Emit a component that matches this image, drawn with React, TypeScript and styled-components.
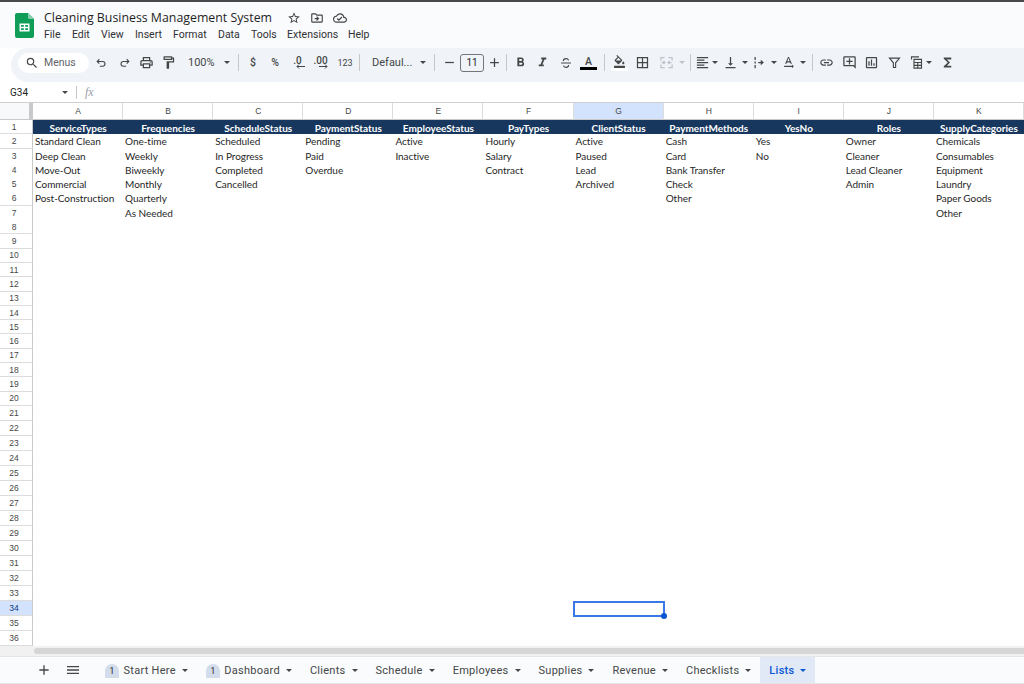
import React from "react";
import styled, { createGlobalStyle } from "styled-components";
import {
  MdOutlineStarBorder, MdOutlineDriveFileMove, MdOutlineCloudDone, MdSearch,
  MdOutlinePrint, MdOutlineFormatPaint, MdFormatBold, MdFormatItalic,
  MdOutlineFormatColorFill, MdBorderAll, MdFormatAlignLeft, MdVerticalAlignBottom,
  MdLink, MdOutlineAddComment, MdOutlineInsertChart,
  MdFunctions, MdAdd, MdRemove, MdMenu, MdTextRotationNone,
} from "react-icons/md";

const Global = createGlobalStyle`
  html, body { margin: 0; padding: 0; background: #fff; overflow: hidden; }
  * { box-sizing: border-box; }
`;

const Page = styled.div`
  width: 1024px;
  height: 684px;
  display: flex;
  flex-direction: column;
  font-family: Roboto, "Liberation Sans", sans-serif;
  color: #444746;
  background: #fff;
  overflow: hidden;
`;

const Header = styled.header`
  height: 48px;
  flex: none;
  display: flex;
  background: #fafbfd;
  border-top: 2px solid #4a4a4a;
  padding: 11px 0 0 15px;
  gap: 10px;
`;

const Logo = styled.svg`
  width: 19px;
  height: 25px;
  flex: none;
`;

const TitleBlock = styled.div`
  display: flex;
  flex-direction: column;
`;

const TitleRow = styled.div`
  display: flex;
  align-items: center;
  height: 15px;
  margin-top: -3px;
`;

const Title = styled.div`
  font-family: "Open Sans", sans-serif;
  font-size: 12.35px;
  line-height: 15px;
  color: #1f1f1f;
  width: 238px;
  white-space: nowrap;
`;

const TitleIcon = styled.span`
  width: 23px;
  display: flex;
  justify-content: center;
  color: #444746;
  font-size: 14px;
`;

const MenuBar = styled.nav`
  display: flex;
  margin-top: 2px;
`;

const MenuItem = styled.span<{ $w: number }>`
  width: ${(p) => p.$w}px;
  font-size: 10.5px;
  line-height: 16px;
  color: #303134;
  white-space: nowrap;
`;

const Toolbar = styled.div`
  height: 34px;
  flex: none;
  margin-left: 11px;
  padding: 0 0 5px 7px;
  display: flex;
  align-items: center;
  background: #f0f4f9;
  border-radius: 17px 0 0 17px;
`;

const SearchPill = styled.div`
  width: 71px;
  height: 20px;
  flex: none;
  border-radius: 10px;
  background: #fff;
  display: flex;
  align-items: center;
  padding-left: 7px;
  font-size: 10.5px;
  color: #5f6368;
  gap: 5px;
  svg { font-size: 14px; color: #444746; }
`;

const Tool = styled.span<{ $w: number; $dim?: boolean }>`
  width: ${(p) => p.$w}px;
  height: 22px;
  flex: none;
  display: flex;
  align-items: center;
  justify-content: center;
  font-size: 15px;
  color: ${(p) => (p.$dim ? "#bfc3c7" : "#444746")};
  svg { flex: none; }
`;

const ToolText = styled(Tool)`
  font-size: 10.5px;
  font-weight: 500;
`;

const SmallNum = styled(Tool)`
  font-size: 9px;
`;

const Decimal = styled(Tool)`
  font-size: 10px;
  font-weight: 500;
  flex-direction: column;
  line-height: 9px;
  svg { margin: -1px -5px 0 0; }
`;

const Select = styled.span<{ $w: number }>`
  width: ${(p) => p.$w}px;
  height: 22px;
  flex: none;
  padding: 0 7px 0 9px;
  display: flex;
  align-items: center;
  justify-content: space-between;
  font-size: 11px;
  color: #444746;
`;

const Caret = styled.span<{ $dim?: boolean; $blue?: boolean }>`
  width: 0;
  height: 0;
  flex: none;
  border-left: 3.5px solid transparent;
  border-right: 3.5px solid transparent;
  border-top: 3.5px solid ${(p) => (p.$blue ? "#0b57d0" : p.$dim ? "#bfc3c7" : "#444746")};
`;

const Sep = styled.span<{ $l: number; $r: number }>`
  width: 1px;
  height: 17px;
  flex: none;
  margin: 0 ${(p) => p.$r}px 0 ${(p) => p.$l}px;
  background: #c7c7c7;
`;

const SizeBox = styled.span`
  width: 24px;
  height: 18px;
  flex: none;
  display: flex;
  align-items: center;
  justify-content: center;
  border: 1px solid #747775;
  border-radius: 3px;
  font-size: 10px;
  color: #1f1f1f;
`;

const ColorLetter = styled.span`
  display: flex;
  flex-direction: column;
  align-items: center;
  width: 18px;
  font-size: 10.5px;
  font-weight: 500;
  line-height: 11px;
  color: #444746;
`;

const ColorBar = styled.span<{ $c: string }>`
  width: 17px;
  height: 3px;
  background: ${(p) => p.$c};
`;

const FillStack = styled.span`
  display: flex;
  flex-direction: column;
  align-items: center;
`;

const FormulaBar = styled.div`
  height: 20px;
  flex: none;
  display: flex;
  align-items: center;
  background: #fff;
  padding-left: 10px;
  font-size: 10px;
  color: #1f1f1f;
`;

const NameBox = styled.span`
  width: 58px;
  display: flex;
  justify-content: space-between;
  align-items: center;
`;

const FxSep = styled.span`
  width: 1px;
  height: 13px;
  margin: 0 8px 0 8px;
  background: #c7c7c7;
`;

const Fx = styled.span`
  font-family: "Liberation Serif", serif;
  font-style: italic;
  font-size: 12px;
  color: #9aa0a6;
`;

const Sheet = styled.div`
  flex: 1;
  min-height: 0;
  display: flex;
  flex-direction: column;
  background: #fff;
  border-top: 1px solid #d0d0d0;
`;

const gridColumns = "33px repeat(10, 90.1px) 90px";

const ColumnHeader = styled.div`
  display: grid;
  grid-template-columns: ${gridColumns};
  height: 17px;
  flex: none;
`;

const Corner = styled.div`
  background: #f8f9fa;
  border-right: 4px solid #c9c9c9;
  border-bottom: 1px solid #c9c9c9;
`;

const ColLabel = styled.div<{ $on?: boolean }>`
  display: flex;
  align-items: center;
  justify-content: center;
  padding-left: 1px;
  font-family: "Liberation Sans", sans-serif;
  font-size: 8.5px;
  color: #444746;
  background: ${(p) => (p.$on ? "#d3e3fd" : "#fff")};
  border-right: 1px solid #dcdcdc;
  border-bottom: 1px solid #c9c9c9;
`;

const Row = styled.div<{ $tall: boolean }>`
  display: grid;
  grid-template-columns: ${gridColumns};
  height: ${(p) => (p.$tall ? 15.02 : 14.3)}px;
  flex: none;
`;

const RowLabel = styled.div<{ $on?: boolean }>`
  display: flex;
  align-items: center;
  justify-content: center;
  padding-right: 4px;
  font-family: "Liberation Sans", sans-serif;
  font-size: 8.5px;
  color: ${(p) => (p.$on ? "#0b3a80" : "#444746")};
  background: ${(p) => (p.$on ? "#d3e3fd" : "#fff")};
  border-right: 1px solid #c9c9c9;
  border-bottom: 1px solid #dcdcdc;
`;

const Cell = styled.div`
  position: relative;
  padding-left: 2px;
  font-family: Lato, "Open Sans", sans-serif;
  font-size: 10px;
  letter-spacing: -0.05px;
  line-height: 15px;
  color: #1f1f1f;
  white-space: nowrap;
`;

const HeadCell = styled.div`
  display: flex;
  align-items: center;
  justify-content: center;
  padding-top: 1px;
  font-family: Lato, "Open Sans", sans-serif;
  font-size: 10px;
  font-weight: 700;
  color: #fff;
  background: #17375e;
  white-space: nowrap;
`;

const Selection = styled.div`
  position: absolute;
  inset: 0 -1px -1px -1px;
  border: 2px solid #3b78e7;
`;

const Handle = styled.span`
  position: absolute;
  right: -4px;
  bottom: -4px;
  width: 6px;
  height: 6px;
  border-radius: 50%;
  background: #0b57d0;
`;

const ScrollArea = styled.div`
  height: 10px;
  flex: none;
  margin-top: auto;
  display: flex;
  background: #f1f1f1;
`;

const ScrollGap = styled.div`
  width: 34px;
  flex: none;
`;

const ScrollThumb = styled.div`
  flex: 1;
  margin-top: 2px;
  height: 6px;
  background: #d6d6d6;
  border-radius: 3px 0 0 3px;
`;

const TabBar = styled.div`
  height: 28px;
  flex: none;
  display: flex;
  align-items: stretch;
  background: #f9fbfd;
  border-bottom: 1px solid #e4e4e4;
  border-top: 1px solid #e4e6ea;
`;

const TabTool = styled.span<{ $w: number }>`
  width: ${(p) => p.$w}px;
  flex: none;
  display: flex;
  align-items: center;
  justify-content: flex-end;
  font-size: 16px;
  color: #444746;
`;

const Tab = styled.div<{ $active?: boolean }>`
  display: flex;
  align-items: center;
  flex: none;
  padding: 1px 9px 0;
  font-size: 11px;
  font-weight: ${(p) => (p.$active ? 500 : 400)};
  letter-spacing: 0.27px;
  white-space: nowrap;
  color: ${(p) => (p.$active ? "#0b57d0" : "#444746")};
  background: ${(p) => (p.$active ? "#e1e9f7" : "transparent")};
`;

const Badge = styled.span`
  width: 14px;
  height: 14px;
  flex: none;
  margin-right: 4.5px;
  border-radius: 7px 7px 0 0;
  background: #d3dcea;
  font-size: 8.5px;
  letter-spacing: 0;
  line-height: 14px;
  text-align: center;
  color: #1f1f1f;
`;

const TabCaret = styled.span`
  margin-left: 6px;
  display: flex;
`;

const columns = [
  ["ServiceTypes", "Standard Clean", "Deep Clean", "Move-Out", "Commercial", "Post-Construction"],
  ["Frequencies", "One-time", "Weekly", "Biweekly", "Monthly", "Quarterly", "As Needed"],
  ["ScheduleStatus", "Scheduled", "In Progress", "Completed", "Cancelled"],
  ["PaymentStatus", "Pending", "Paid", "Overdue"],
  ["EmployeeStatus", "Active", "Inactive"],
  ["PayTypes", "Hourly", "Salary", "Contract"],
  ["ClientStatus", "Active", "Paused", "Lead", "Archived"],
  ["PaymentMethods", "Cash", "Card", "Bank Transfer", "Check", "Other"],
  ["YesNo", "Yes", "No"],
  ["Roles", "Owner", "Cleaner", "Lead Cleaner", "Admin"],
  ["SupplyCategories", "Chemicals", "Consumables", "Equipment", "Laundry", "Paper Goods", "Other"],
];

const letters = "ABCDEFGHIJK".split("");
const menus: [string, number][] = [
  ["File", 28], ["Edit", 29], ["View", 34], ["Insert", 38], ["Format", 45], ["Data", 33],
  ["Tools", 36], ["Extensions", 61], ["Help", 30],
];
const tabs: [string, boolean][] = [
  ["Start Here", true], ["Dashboard", true], ["Clients", false], ["Schedule", false],
  ["Employees", false], ["Supplies", false], ["Revenue", false], ["Checklists", false],
];

const StrokeIcon = ({ d, size = 15, w = 2 }: { d: string; size?: number; w?: number }) => (
  <svg width={size} height={size} viewBox="0 0 24 24" fill="none" stroke="currentColor" strokeWidth={w}>
    <path d={d} />
  </svg>
);

const icons = {
  undo: "M8 6 4 10l4 4M4 10h10a4.5 4.5 0 0 1 0 9H9",
  redo: "M16 6l4 4-4 4M20 10H10a4.5 4.5 0 0 0 0 9h5",
  strike: "M7.5 8.5C7.5 6 9.5 4.5 12 4.5s4 1.2 4.5 3M16.5 15.5c0 2.5-2 4-4.5 4s-4-1.2-4.5-3M3.5 12h17",
  merge: "M3 9V4h6M15 4h6v5M3 15v5h6M15 20h6v-5M4 12h5M7 9.5 9.5 12 7 14.5M20 12h-5M17 9.5 14.5 12 17 14.5",
  wrap: "M5 3v5M5 10.5v3M5 16v5M10 12h5",
  filter: "M4 5h16l-6.2 7.5V20h-3.6v-7.5z",
  table: "M4 7V3h12M8 7h12v14H8zM8 12h12M8 16.5h12M14 12v9",
};

const WrapGlyph = () => (
  <svg width="15" height="15" viewBox="0 0 24 24">
    <path d={icons.wrap} fill="none" stroke="currentColor" strokeWidth="2" />
    <path d="M14 7.5v9l5-4.5z" fill="currentColor" />
  </svg>
);

const Arrow = ({ flip }: { flip?: boolean }) => (
  <svg width="11" height="5" viewBox="0 0 11 5" fill="none" stroke="currentColor" strokeWidth="1">
    {flip ? <path d="M2 2.5h8M4 .5l-2 2 2 2" /> : <path d="M1 2.5h8M7 .5l2 2-2 2" />}
  </svg>
);

export default function App() {
  return (
    <Page>
      <Global />
      <Header>
        <Logo viewBox="0 0 19 25">
          <path d="M2 0h11l6 6v17a2 2 0 0 1-2 2H2a2 2 0 0 1-2-2V2a2 2 0 0 1 2-2z" fill="#0f9d58" />
          <path d="M13 0l6 6h-4.5A1.5 1.5 0 0 1 13 4.5z" fill="#87ceac" />
          <path d="M4.5 10.5h10v8h-10z M6 12v1.8h2.8V12z M10.2 12v1.8H13V12z M6 15.2V17h2.8v-1.8z M10.2 15.2V17H13v-1.8z" fill="#fff" fillRule="evenodd" />
        </Logo>
        <TitleBlock>
          <TitleRow>
            <Title>Cleaning Business Management System</Title>
            <TitleIcon><MdOutlineStarBorder /></TitleIcon>
            <TitleIcon><MdOutlineDriveFileMove /></TitleIcon>
            <TitleIcon><MdOutlineCloudDone /></TitleIcon>
          </TitleRow>
          <MenuBar>
            {menus.map(([m, w]) => <MenuItem key={m} $w={w}>{m}</MenuItem>)}
          </MenuBar>
        </TitleBlock>
      </Header>

      <Toolbar>
        <SearchPill><MdSearch />Menus</SearchPill>
        <Tool $w={24}><StrokeIcon d={icons.undo} size={13} /></Tool>
        <Tool $w={22}><StrokeIcon d={icons.redo} size={13} /></Tool>
        <Tool $w={23}><MdOutlinePrint /></Tool>
        <Tool $w={21}><MdOutlineFormatPaint /></Tool>
        <Select $w={58}>100%<Caret /></Select>
        <Sep $l={1} $r={3} />
        <ToolText $w={22}>$</ToolText>
        <ToolText $w={22}>%</ToolText>
        <Decimal $w={23}>.0<Arrow flip /></Decimal>
        <Decimal $w={23}>.00<Arrow /></Decimal>
        <SmallNum $w={26}>123</SmallNum>
        <Sep $l={1} $r={3} />
        <Select $w={70}>Defaul...<Caret /></Select>
        <Sep $l={1} $r={3} />
        <Tool $w={22}><MdRemove /></Tool>
        <SizeBox>11</SizeBox>
        <Tool $w={20}><MdAdd /></Tool>
        <Sep $l={2} $r={2} />
        <Tool $w={22}><MdFormatBold /></Tool>
        <Tool $w={23}><MdFormatItalic /></Tool>
        <Tool $w={23}><StrokeIcon d={icons.strike} size={14} w={1.8} /></Tool>
        <Tool $w={23}><ColorLetter>A<ColorBar $c="#000" /></ColorLetter></Tool>
        <Sep $l={4} $r={3} />
        <Tool $w={22}><FillStack><MdOutlineFormatColorFill size={13} /><ColorBar $c="#fff" /></FillStack></Tool>
        <Tool $w={24}><MdBorderAll /></Tool>
        <Tool $w={24} $dim><StrokeIcon d={icons.merge} /></Tool>
        <Tool $w={8}><Caret $dim /></Tool>
        <Sep $l={4} $r={1} />
        <Tool $w={20}><MdFormatAlignLeft /></Tool>
        <Tool $w={6}><Caret /></Tool>
        <Tool $w={24}><MdVerticalAlignBottom /></Tool>
        <Tool $w={6}><Caret /></Tool>
        <Tool $w={23}><WrapGlyph /></Tool>
        <Tool $w={6}><Caret /></Tool>
        <Tool $w={23}><MdTextRotationNone /></Tool>
        <Tool $w={6}><Caret /></Tool>
        <Sep $l={6} $r={2} />
        <Tool $w={23}><MdLink /></Tool>
        <Tool $w={22}><MdOutlineAddComment /></Tool>
        <Tool $w={23}><MdOutlineInsertChart /></Tool>
        <Tool $w={23}><StrokeIcon d={icons.filter} w={1.8} /></Tool>
        <Tool $w={20}><StrokeIcon d={icons.table} w={1.8} /></Tool>
        <Tool $w={6}><Caret /></Tool>
        <Tool $w={31}><MdFunctions /></Tool>
      </Toolbar>

      <FormulaBar>
        <NameBox>G34<Caret /></NameBox>
        <FxSep />
        <Fx>fx</Fx>
      </FormulaBar>

      <Sheet>
        <ColumnHeader>
          <Corner />
          {letters.map((l) => <ColLabel key={l} $on={l === "G"}>{l}</ColLabel>)}
        </ColumnHeader>
        {Array.from({ length: 36 }, (_, r) => (
          <Row key={r} $tall={r >= 20}>
            <RowLabel $on={r === 33}>{r + 1}</RowLabel>
            {columns.map((col, c) =>
              r === 0 ? (
                <HeadCell key={c}>{col[0]}</HeadCell>
              ) : (
                <Cell key={c}>
                  {col[r]}
                  {r === 33 && c === 6 && <Selection><Handle /></Selection>}
                </Cell>
              )
            )}
          </Row>
        ))}
        <ScrollArea>
          <ScrollGap />
          <ScrollThumb />
        </ScrollArea>
      </Sheet>

      <TabBar>
        <TabTool $w={52}><MdAdd /></TabTool>
        <TabTool $w={29}><MdMenu /></TabTool>
        <TabTool $w={15} />
        {tabs.map(([t, b]) => (
          <Tab key={t}>
            {b && <Badge>1</Badge>}
            {t}
            <TabCaret><Caret /></TabCaret>
          </Tab>
        ))}
        <Tab $active>
          Lists
          <TabCaret><Caret $blue /></TabCaret>
        </Tab>
      </TabBar>
    </Page>
  );
}
